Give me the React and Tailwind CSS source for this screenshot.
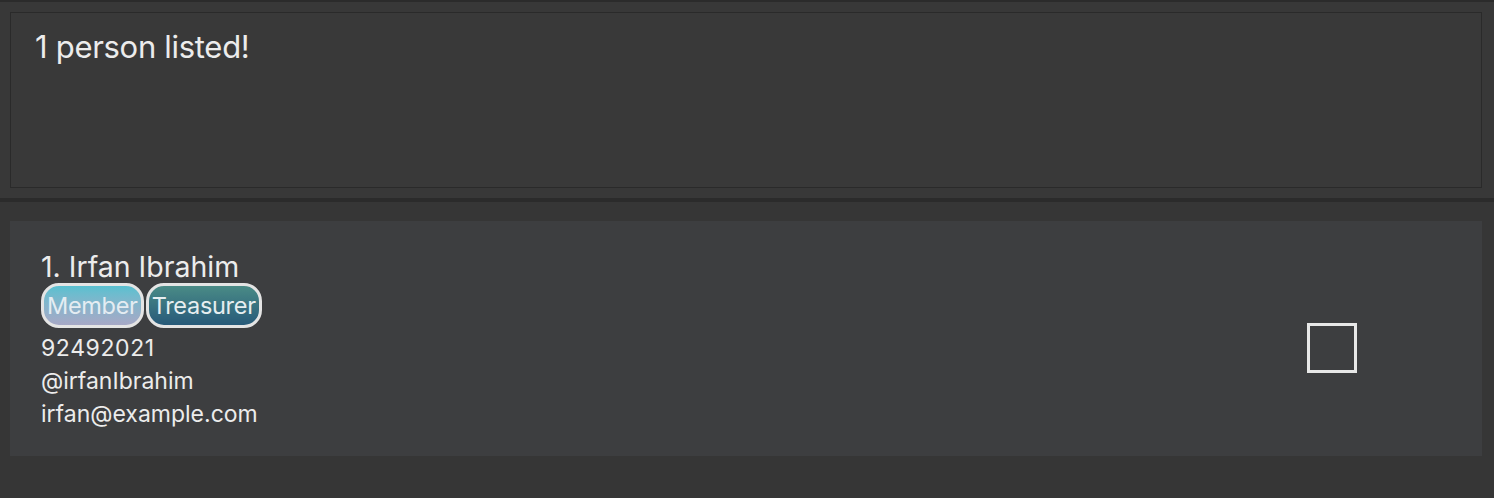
const person = {
  index: 1,
  name: 'Irfan Ibrahim',
  tags: ['Member', 'Treasurer'],
  phone: '92492021',
  handle: '@irfanIbrahim',
  email: 'irfan@example.com',
}

const TAG_STYLES = {
  Member: 'bg-gradient-to-b from-[#58c0d0] to-[#a6a8c6] text-[#e4ecf2]',
  Treasurer: 'bg-gradient-to-b from-[#4a8b86] to-[#285a79] text-[#e6eef0]',
}

function Tag({ label }) {
  return (
    <span
      className={`inline-flex items-center h-[45px] px-[3px] rounded-[18px] border-[3px] border-[#e4e4e4] text-[23.5px] leading-none tracking-[-0.3px] ${TAG_STYLES[label]}`}
    >
      {label}
    </span>
  )
}

export default function App() {
  return (
    <div
      className="w-[1494px] h-[498px] flex flex-col bg-[#363636] text-[#ececec] overflow-hidden"
      style={{ fontFamily: 'Inter, "Noto Sans", sans-serif' }}
    >
      <div className="h-[2px] bg-[#2b2b2b]" />

      {/* result display */}
      <div className="h-[196px] bg-[#383838] p-[10px] pr-[12px]">
        <div className="h-[176px] border border-[#2a2a2a] bg-[#393939] px-[24px] pt-[15px]">
          <p className="text-[31px] leading-[38px] tracking-[-0.3px]">1 person listed!</p>
        </div>
      </div>

      <div className="h-[4px] bg-[#2b2b2b]" />

      {/* person list */}
      <div className="flex-1 pt-[19px] pl-[10px] pr-[12px]">
        <div className="h-[235px] bg-[#3d3e40] flex items-center">
          <div className="flex-1 pl-[31px] pt-[4px]">
            <p className="text-[28.5px] leading-[34px]">
              {person.index}. {person.name}
            </p>
            <div className="flex gap-[2px] mt-[-1px]">
              {person.tags.map((t) => (
                <Tag key={t} label={t} />
              ))}
            </div>
            <p className="text-[23px] leading-[33px] mt-[4px] tracking-[0.6px]">{person.phone}</p>
            <p className="text-[23px] leading-[33px]">{person.handle}</p>
            <p className="text-[23px] leading-[33px]">{person.email}</p>
          </div>
          <div className="w-[50px] h-[50px] border-[3px] border-[#e8e8e8] mr-[125px] mt-[19px]" />
        </div>
      </div>
    </div>
  )
}
